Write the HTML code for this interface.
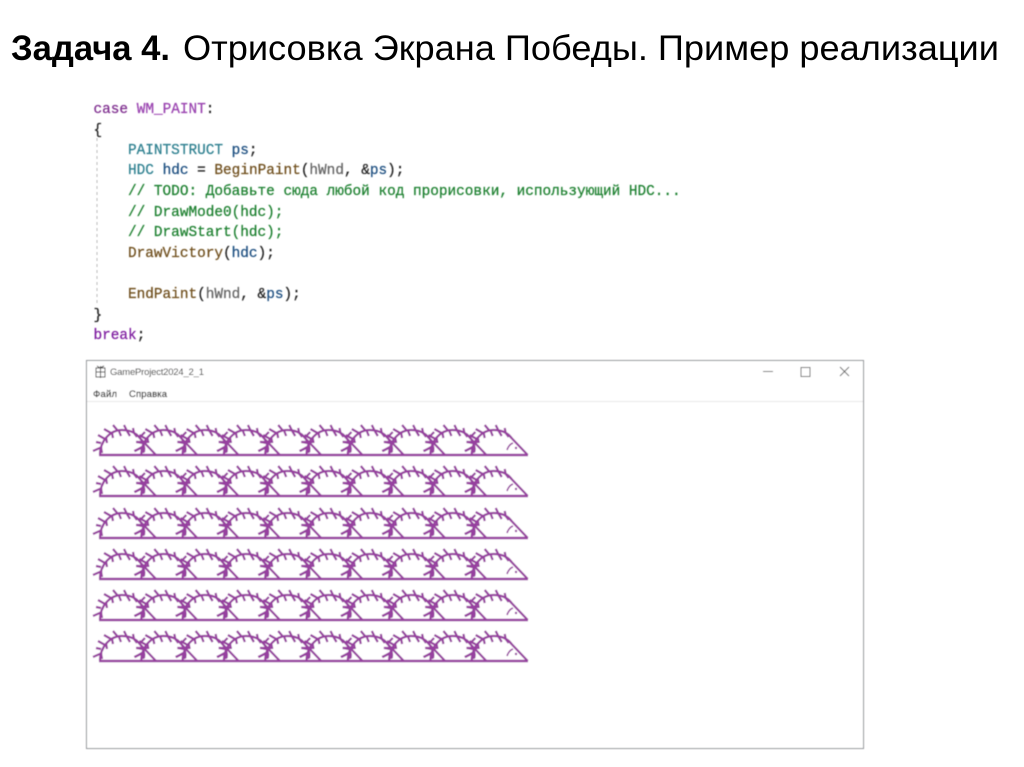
<!DOCTYPE html>
<html><head><meta charset="utf-8"><style>
html,body{margin:0;padding:0;background:#fff;width:1024px;height:767px;overflow:hidden}
svg{display:block}
.c text{font-family:"Liberation Mono",monospace;font-size:14.4px;stroke:currentColor;stroke-width:.25}
</style></head><body>
<svg width="1024" height="767" viewBox="0 0 1024 767" xmlns="http://www.w3.org/2000/svg">
<defs>
<filter id="b" x="-5%" y="-5%" width="110%" height="110%"><feGaussianBlur stdDeviation="0.5"/></filter>
<g id="h" fill="none" stroke="#96409f" stroke-width="2.200">
<path d="M2 0C2-14 12-25 24-25C32-25 38-22 42-17"/>
<path d="M38-21L58 0"/>
<path d="M4-8L-5-4M3-12L-2-13M3-8L4-2M7-16L0-20M8-18L9-12M13-22L6-26M14-22L15-17M20-24L15-30M21-24L23-19M29-24L26-30M29-24L32-19M36-22L35-27M36-22L39-18"/>
</g>
<g id="x" fill="none" stroke="#96409f" stroke-width="2.200">
<path d="M42-17C45-13 47-8 46-3M42-18L47-23M44-11L51-14M44-8L37-4M44-13L38-13"/>
</g>
<g id="row">
<path d="M99 0H528" stroke="#96409f" stroke-width="2.500" fill="none"/>
<use href="#h" x="98"/><use href="#h" x="139.300"/><use href="#h" x="180.600"/><use href="#h" x="221.900"/><use href="#h" x="263.200"/><use href="#h" x="304.500"/><use href="#h" x="345.800"/><use href="#h" x="387.100"/><use href="#h" x="428.400"/><use href="#h" x="469.700"/>
<use href="#x" x="98"/><use href="#x" x="139.300"/><use href="#x" x="180.600"/><use href="#x" x="221.900"/><use href="#x" x="263.200"/><use href="#x" x="304.500"/><use href="#x" x="345.800"/><use href="#x" x="387.100"/><use href="#x" x="428.400"/>
<path d="M507-5C508-8 510-11 513-12" stroke="#96409f" stroke-width="1.500" fill="none"/>
<circle cx="516" cy="-7" r="1.200" fill="#96409f"/>
</g>
</defs>
<text x="11" y="60" font-family="Liberation Sans,sans-serif" font-size="35" font-weight="700" fill="#000" textLength="159" lengthAdjust="spacingAndGlyphs">Задача 4.</text>
<text x="183" y="60" font-family="Liberation Sans,sans-serif" font-size="35" fill="#000" textLength="816" lengthAdjust="spacingAndGlyphs">Отрисовка Экрана Победы. Пример реализации</text>
<g filter="url(#b)">
<path d="M97 138V305" stroke="#bbb" stroke-dasharray="3 3" fill="none"/>
<g class="c" xml:space="preserve" fill="#222" color="#222">
<text x="93.500" y="113"><tspan fill="#7f2f8f" stroke="#7f2f8f">case</tspan> <tspan fill="#9a44b0" stroke="#9a44b0">WM_PAINT</tspan>:</text>
<text x="93.500" y="134">{</text>
<text x="128" y="154"><tspan fill="#2f8090" stroke="#2f8090">PAINTSTRUCT</tspan> <tspan fill="#1f4f80" stroke="#1f4f80">ps</tspan>;</text>
<text x="128" y="174"><tspan fill="#2f8090" stroke="#2f8090">HDC</tspan> <tspan fill="#1f4f80" stroke="#1f4f80">hdc</tspan> = <tspan fill="#6f4f1f" stroke="#6f4f1f">BeginPaint</tspan>(<tspan fill="#666" stroke="#666">hWnd</tspan>, &amp;<tspan fill="#1f4f80" stroke="#1f4f80">ps</tspan>);</text>
<text x="128" y="195" fill="#1f8030" color="#1f8030">// TODO: Добавьте сюда любой код прорисовки, использующий HDC...</text>
<text x="128" y="216" fill="#1f8030" color="#1f8030">// DrawMode0(hdc);</text>
<text x="128" y="236" fill="#1f8030" color="#1f8030">// DrawStart(hdc);</text>
<text x="128" y="257"><tspan fill="#6f4f1f" stroke="#6f4f1f">DrawVictory</tspan>(<tspan fill="#1f4f80" stroke="#1f4f80">hdc</tspan>);</text>
<text x="128" y="298"><tspan fill="#6f4f1f" stroke="#6f4f1f">EndPaint</tspan>(<tspan fill="#666" stroke="#666">hWnd</tspan>, &amp;<tspan fill="#1f4f80" stroke="#1f4f80">ps</tspan>);</text>
<text x="93.500" y="319">}</text>
<text x="93.500" y="339"><tspan fill="#7f1fa0" stroke="#7f1fa0">break</tspan>;</text>
</g>
<rect x="86.500" y="360.500" width="777" height="388" fill="#fff" stroke="#8f9396"/>
<path d="M87 401.500H863" stroke="#e8e8e8"/>
<g fill="none" stroke="#444"><rect x="96" y="368" width="9" height="9"/><path d="M100.500 366V378M96 372H105M97 366L100 368L104 366"/></g>
<text x="110" y="375" font-family="Liberation Sans,sans-serif" font-size="9.500" fill="#333" textLength="94">GameProject2024_2_1</text>
<text x="93" y="397" font-family="Liberation Sans,sans-serif" font-size="9.500" fill="#333" stroke="#333" stroke-width=".2" textLength="24">Файл</text>
<text x="129" y="397" font-family="Liberation Sans,sans-serif" font-size="9.500" fill="#333" stroke="#333" stroke-width=".2" textLength="38">Справка</text>
<g fill="none" stroke="#666"><path d="M763 371.500H773"/><rect x="801" y="367.500" width="9" height="9"/><path d="M840 367L849 376M849 367L840 376"/></g>
<use href="#row" y="455"/><use href="#row" y="496"/><use href="#row" y="538"/><use href="#row" y="579"/><use href="#row" y="620"/><use href="#row" y="661"/>
</g>
</svg>
</body></html>
